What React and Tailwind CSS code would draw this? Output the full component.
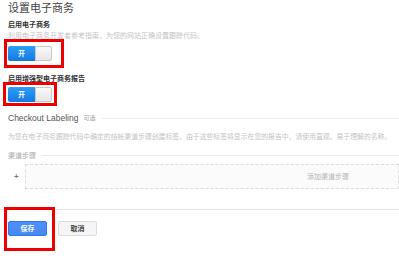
import React from "react";

const cjk = { fontFamily: '"Liberation Sans", "Noto Sans CJK SC", sans-serif' };

function Toggle() {
  return (
    <div className="flex h-[15px] w-[44px]">
      <div className="flex w-[27px] items-center justify-center rounded-l-[2px] bg-gradient-to-b from-[#2f9ef5] to-[#117ae3] text-[7px] font-bold leading-none text-white">
        开
      </div>
      <div className="w-[17px] rounded-r-[2px] border border-[#c8c8c8] bg-gradient-to-b from-[#fafafa] to-[#e6e6e6]" />
    </div>
  );
}

export default function App() {
  return (
    <div className="h-[261px] w-[399px] overflow-hidden bg-white pl-2" style={cjk}>
      <div className="flex h-[17px] items-center text-[11px] leading-none text-[#444]">设置电子商务</div>
      <div className="flex h-[15px] items-center text-[7px] font-bold leading-none text-[#333]">启用电子商务</div>
      <div className="flex h-[6px] items-center whitespace-nowrap text-[7px] leading-none text-[#c4c4c4]">
        利用电子商务开发者参考指南，为您的网站正确设置跟踪代码。
      </div>
      <div className="relative mt-[8px] w-[44px]">
        <Toggle />
        <div className="pointer-events-none absolute -top-[7px] -bottom-[7px] -left-[4px] -right-[12px] border-[3px] border-[#ee0000]" />
      </div>
      <div className="mt-[10px] flex h-[14px] items-center text-[7px] font-bold leading-none text-[#333]">启用增强型电子商务报告</div>
      <div className="relative mt-[2px] w-[44px]">
        <Toggle />
        <div className="pointer-events-none absolute -top-[5px] -bottom-[4px] -left-[5px] -right-[5px] border-[3px] border-[#ee0000]" />
      </div>
      <div className="mt-[9px] flex h-[14px] items-center gap-[5px]">
        <span className="text-[8.5px] leading-none text-[#555]">Checkout Labeling</span>
        <span className="text-[6px] leading-none text-[#999]">可选</span>
        <div className="ml-[2px] h-px flex-1 bg-[#ececec]" />
      </div>
      <div className="mt-[6px] flex h-[12px] items-center whitespace-nowrap text-[6.85px] leading-none text-[#c4c4c4]">
        为您在电子商务跟踪代码中确定的结帐渠道步骤创建标签。由于这些标签将显示在您的报告中，请使用直观、易于理解的名称。
      </div>
      <div className="mt-[6px] flex h-[12px] items-center gap-[6px]">
        <span className="text-[7px] leading-none text-[#aaa]">渠道步骤</span>
        <div className="h-px flex-1 bg-[#ececec]" />
      </div>
      <div className="mt-[3px] flex h-[25px] items-center">
        <span className="w-[17px] pl-[6px] text-[8px] font-bold leading-none text-[#777]">+</span>
        <div className="flex h-full flex-1 items-center border border-dashed border-[#dcdcdc] bg-[#fbfbfb] pl-[281px] text-[7px] leading-none text-[#b5b5b5]">
          添加渠道步骤
        </div>
      </div>
      <div className="-ml-2 mt-[20px] h-px bg-[#e8e8e8]" />
      <div className="mt-[11px] flex gap-[11px]">
        <div className="relative">
          <div className="flex h-[15px] w-[39px] items-center justify-center rounded-[2px] border border-[#3079ed] bg-gradient-to-b from-[#4d90fe] to-[#4787ed] text-[7px] font-bold leading-none text-white">
            保存
          </div>
          <div className="pointer-events-none absolute -top-[14px] -bottom-[15px] -left-[4px] -right-[8px] border-[3px] border-[#ee0000]" />
        </div>
        <div className="flex h-[15px] w-[39px] items-center justify-center rounded-[2px] border border-[#dcdcdc] bg-[#f5f5f5] text-[7px] font-bold leading-none text-[#444]">
          取消
        </div>
      </div>
    </div>
  );
}
